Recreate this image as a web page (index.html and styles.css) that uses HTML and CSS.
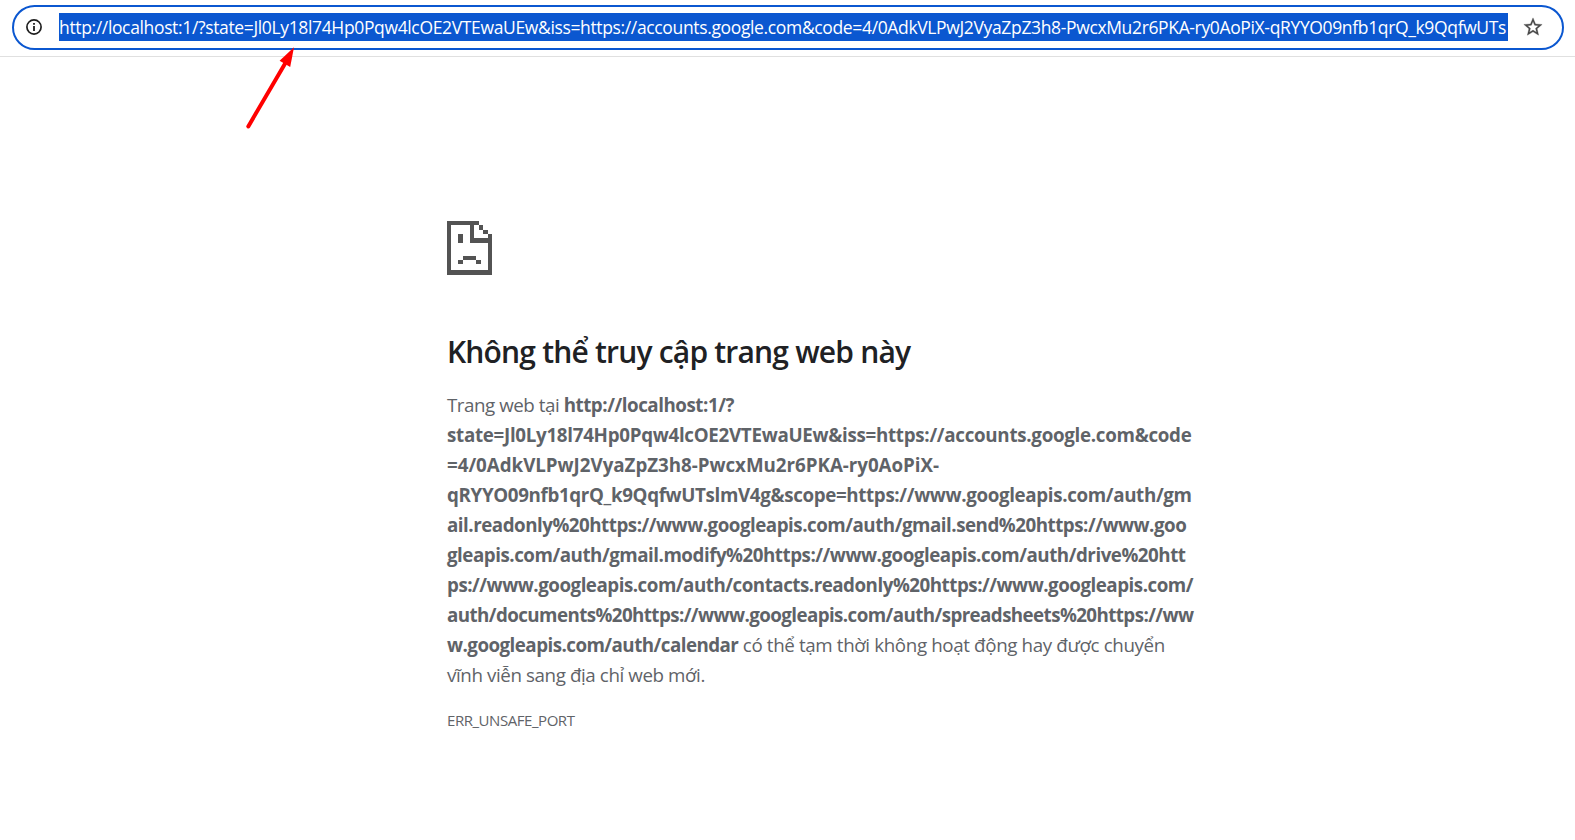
FILE: index.html
```html
<!DOCTYPE html>
<html lang="vi">
<head>
    <meta charset="UTF-8">
    <meta name="viewport" content="width=device-width, initial-scale=1.0">
    <title>localhost</title>
    <link rel="stylesheet" href="styles.css">
</head>
<body>
    <header class="toolbar">
        <div class="omnibox">
            <svg class="info-icon" viewBox="0 0 16 16">
                <circle cx="8" cy="8" r="7.1" fill="none" stroke="#1f1f1f" stroke-width="1.7"/>
                <path d="M7.1 4h1.8v1.8H7.1zM7.1 7h1.8v5H7.1z" fill="#1f1f1f"/>
            </svg>
            <div class="url">http://localhost:1/?state=Jl0Ly18l74Hp0Pqw4lcOE2VTEwaUEw&amp;iss=https://accounts.google.com&amp;code=4/0AdkVLPwJ2VyaZpZ3h8-PwcxMu2r6PKA-ry0AoPiX-qRYYO09nfb1qrQ_k9QqfwUTs</div>
            <svg class="star-icon" viewBox="0 0 24 24">
                <path d="M22 9.24l-7.19-.62L12 2 9.19 8.63 2 9.24l5.46 4.73L5.82 21 12 17.27 18.18 21l-1.63-7.03L22 9.24zM12 15.4l-3.76 2.27 1-4.28-3.32-2.88 4.38-.38L12 6.1l1.71 4.04 4.38.38-3.32 2.88 1 4.28L12 15.4z"/>
            </svg>
        </div>
    </header>

    <main class="error-page">
        <svg class="sad-icon" viewBox="51 47 135 163" preserveAspectRatio="none" shape-rendering="crispEdges">
            <path d="M51 47h96v13H64v136h109v-84h-53V60h13v38h40V86h13v124H51z"/>
            <path d="M147 60h13v13h-13zM160 73h13v13h-13zM85 86h13v26H85z"/>
            <path d="M98 152h40v13H98zM85 165h13v13H85zM138 165h14v13h-14z"/>
        </svg>
        <h1>Không thể truy cập trang web này</h1>
        <p class="message">
            <span class="l1">Trang web tại <b>http://localhost:1/?</b></span>
            <b class="l2">state=Jl0Ly18l74Hp0Pqw4lcOE2VTEwaUEw&amp;iss=https://accounts.google.com&amp;code</b>
            <b class="l3">=4/0AdkVLPwJ2VyaZpZ3h8-PwcxMu2r6PKA-ry0AoPiX-</b>
            <b class="l4">qRYYO09nfb1qrQ_k9QqfwUTslmV4g&amp;scope=https://www.googleapis.com/auth/gm</b>
            <b class="l5">ail.readonly%20https://www.googleapis.com/auth/gmail.send%20https://www.goo</b>
            <b class="l6">gleapis.com/auth/gmail.modify%20https://www.googleapis.com/auth/drive%20htt</b>
            <b class="l7">ps://www.googleapis.com/auth/contacts.readonly%20https://www.googleapis.com/</b>
            <b class="l8">auth/documents%20https://www.googleapis.com/auth/spreadsheets%20https://ww</b>
            <span class="l9"><b>w.googleapis.com/auth/calendar</b> có thể tạm thời không hoạt động hay được chuyển</span>
            <span class="l10">vĩnh viễn sang địa chỉ web mới.</span>
        </p>
        <div class="error-code">ERR_UNSAFE_PORT</div>
    </main>

    <svg class="arrow" viewBox="240 40 65 95">
        <path d="M248.3 126.4L286 62" fill="none" stroke="#f00" stroke-width="4" stroke-linecap="round"/>
        <path d="M294 47.3l-14.4 13.5 10.6 6.2z" fill="#f00"/>
    </svg>
</body>
</html>
```
FILE: styles.css
```css
body {
    margin: 0;
    background-color: #fff;
    font-family: "Open Sans", "Noto Sans", sans-serif;
    color: #5f6368;
    overflow: hidden;
}
.toolbar {
    box-sizing: border-box;
    height: 57px;
    padding: 5px 11px 0 12px;
    border-bottom: 1px solid #e0e0e0;
}
.omnibox {
    box-sizing: border-box;
    display: flex;
    align-items: center;
    height: 45px;
    padding: 0 18px 1px 12px;
    border: 2px solid #0b57d0;
    border-radius: 23px;
}
.info-icon {
    flex: none;
    width: 16px;
    height: 16px;
    margin-right: 17px;
}
.url {
    flex: none;
    width: 1449px;
    height: 28px;
    background-color: #0b57d0;
    color: #fff;
    font-size: 17.5px;
    line-height: 28px;
    letter-spacing: -0.353px;
    white-space: nowrap;
}
.star-icon {
    flex: none;
    width: 22px;
    height: 22px;
    margin-left: 14px;
    fill: #474747;
    stroke: #474747;
    stroke-width: 0.3;
}
.error-page {
    width: 750px;
    padding: 164px 0 0 447px;
}
.sad-icon {
    display: block;
    width: 45px;
    height: 54px;
    fill: #535353;
}
h1 {
    margin: 58px 0 19px;
    color: #202124;
    font-size: 30px;
    font-weight: 600;
    line-height: 38px;
    letter-spacing: -0.8px;
    white-space: nowrap;
}
.message {
    margin: 0;
    font-size: 18.75px;
    line-height: 30px;
}
.message > * {
    display: block;
    white-space: nowrap;
}
.l1 { letter-spacing: -0.46px; }
.l2 { letter-spacing: -0.29px; }
.l3 { letter-spacing: -0.03px; }
.l4 { letter-spacing: -0.35px; }
.l5 { letter-spacing: -0.485px; }
.l6 { letter-spacing: -0.475px; }
.l7 { letter-spacing: -0.484px; }
.l8 { letter-spacing: -0.58px; }
.l9 { letter-spacing: -0.369px; }
.l9 b { letter-spacing: -0.53px; }
.l10 { letter-spacing: -0.399px; }
.error-code {
    margin-top: 18px;
    font-size: 15px;
    line-height: 24px;
    letter-spacing: -0.45px;
}
/* pointer drawn over the address bar */
.arrow {
    position: absolute;
    left: 240px;
    top: 40px;
    width: 65px;
    height: 95px;
}
```
